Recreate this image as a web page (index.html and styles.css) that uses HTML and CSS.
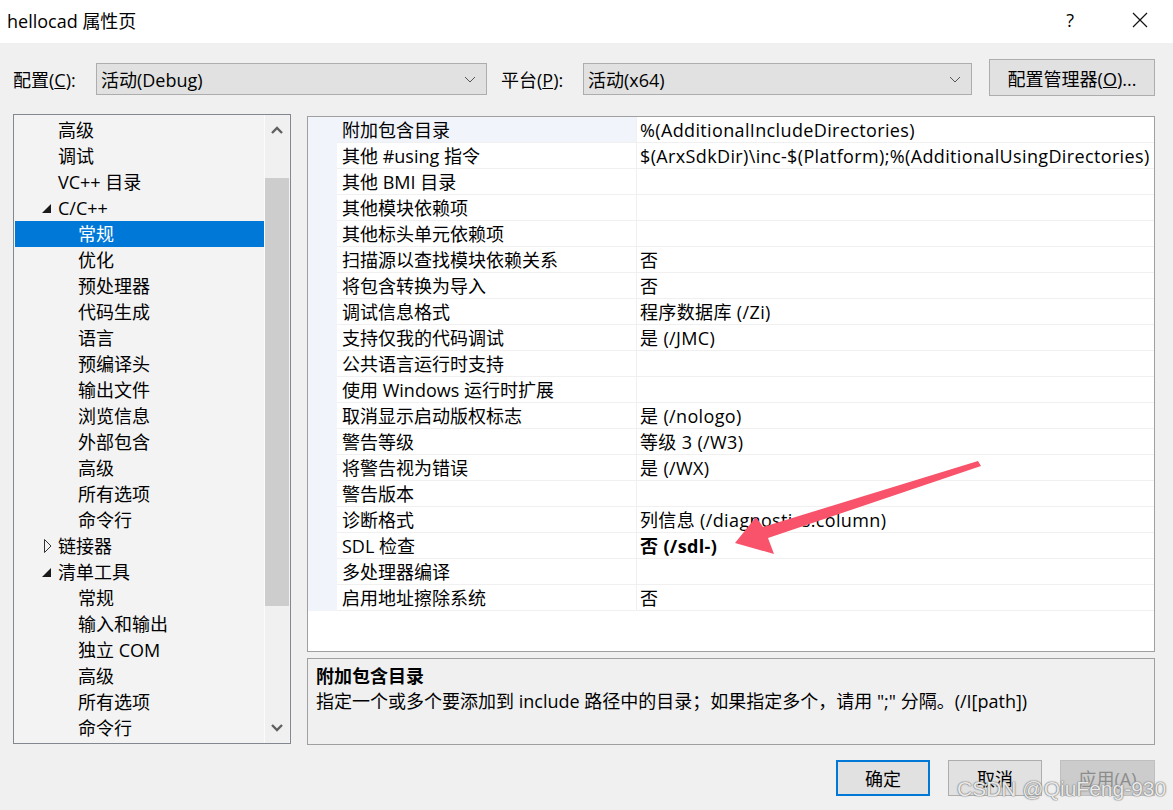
FILE: index.html
```html
<!DOCTYPE html>
<html lang="zh-CN">
<head>
    <meta charset="UTF-8">
    <title>hellocad 属性页</title>
    <link rel="stylesheet" href="styles.css">
</head>
<body>
<div class="window">
    <header class="titlebar">
        <span class="title">hellocad 属性页</span>
        <div class="caption">
            <span class="help">?</span>
            <svg class="close" width="16" height="16" viewBox="0 0 16 16">
                <path d="M1 1 L15 15 M15 1 L1 15" stroke="#111" stroke-width="1.2" fill="none"/>
            </svg>
        </div>
    </header>

    <div class="config-bar">
        <span class="cfg-label">配置(<u>C</u>):</span>
        <div class="combo combo-config">
            <span>活动(Debug)</span>
            <svg class="chev" width="12" height="7" viewBox="0 0 12 7"><path d="M1 1 L6 6 L11 1" stroke="#555" fill="none"/></svg>
        </div>
        <span class="cfg-label platform">平台(<u>P</u>):</span>
        <div class="combo combo-platform">
            <span>活动(x64)</span>
            <svg class="chev" width="12" height="7" viewBox="0 0 12 7"><path d="M1 1 L6 6 L11 1" stroke="#555" fill="none"/></svg>
        </div>
        <button class="btn btn-manager">配置管理器(<u>O</u>)...</button>
    </div>

    <div class="main">
        <div class="tree">
            <ul class="tree-list">
                <li class="node l1">高级</li>
                <li class="node l1">调试</li>
                <li class="node l1">VC++ 目录</li>
                <li class="node l1"><svg class="caret" width="9" height="9" viewBox="0 0 9 9"><polygon points="9,0 9,9 0,9" fill="#1a1a1a"/></svg>C/C++</li>
                <li class="node l2 selected">常规</li>
                <li class="node l2">优化</li>
                <li class="node l2">预处理器</li>
                <li class="node l2">代码生成</li>
                <li class="node l2">语言</li>
                <li class="node l2">预编译头</li>
                <li class="node l2">输出文件</li>
                <li class="node l2">浏览信息</li>
                <li class="node l2">外部包含</li>
                <li class="node l2">高级</li>
                <li class="node l2">所有选项</li>
                <li class="node l2">命令行</li>
                <li class="node l1"><svg class="caret closed" width="8" height="14" viewBox="0 0 8 14"><polygon points="0.5,0.5 7,7 0.5,13.5" fill="none" stroke="#333"/></svg>链接器</li>
                <li class="node l1"><svg class="caret" width="9" height="9" viewBox="0 0 9 9"><polygon points="9,0 9,9 0,9" fill="#1a1a1a"/></svg>清单工具</li>
                <li class="node l2">常规</li>
                <li class="node l2">输入和输出</li>
                <li class="node l2">独立 COM</li>
                <li class="node l2">高级</li>
                <li class="node l2">所有选项</li>
                <li class="node l2">命令行</li>
            </ul>
            <div class="scrollbar">
                <svg class="sb-arrow" width="12" height="8" viewBox="0 0 12 8"><path d="M1 7 L6 2 L11 7" stroke="#606060" stroke-width="2.4" fill="none"/></svg>
                <div class="sb-track"><div class="sb-thumb"></div></div>
                <svg class="sb-arrow" width="12" height="8" viewBox="0 0 12 8"><path d="M1 1 L6 6 L11 1" stroke="#606060" stroke-width="2.4" fill="none"/></svg>
            </div>
        </div>

        <div class="right">
            <div class="grid">
                <table class="props">
                    <tr class="current"><td class="gut"></td><td class="name">附加包含目录</td><td class="val">%(AdditionalIncludeDirectories)</td></tr>
                    <tr><td class="gut"></td><td class="name">其他 #using 指令</td><td class="val">$(ArxSdkDir)\inc-$(Platform);%(AdditionalUsingDirectories)</td></tr>
                    <tr><td class="gut"></td><td class="name">其他 BMI 目录</td><td class="val"></td></tr>
                    <tr><td class="gut"></td><td class="name">其他模块依赖项</td><td class="val"></td></tr>
                    <tr><td class="gut"></td><td class="name">其他标头单元依赖项</td><td class="val"></td></tr>
                    <tr><td class="gut"></td><td class="name">扫描源以查找模块依赖关系</td><td class="val">否</td></tr>
                    <tr><td class="gut"></td><td class="name">将包含转换为导入</td><td class="val">否</td></tr>
                    <tr><td class="gut"></td><td class="name">调试信息格式</td><td class="val">程序数据库 (/Zi)</td></tr>
                    <tr><td class="gut"></td><td class="name">支持仅我的代码调试</td><td class="val">是 (/JMC)</td></tr>
                    <tr><td class="gut"></td><td class="name">公共语言运行时支持</td><td class="val"></td></tr>
                    <tr><td class="gut"></td><td class="name">使用 Windows 运行时扩展</td><td class="val"></td></tr>
                    <tr><td class="gut"></td><td class="name">取消显示启动版权标志</td><td class="val">是 (/nologo)</td></tr>
                    <tr><td class="gut"></td><td class="name">警告等级</td><td class="val">等级 3 (/W3)</td></tr>
                    <tr><td class="gut"></td><td class="name">将警告视为错误</td><td class="val">是 (/WX)</td></tr>
                    <tr><td class="gut"></td><td class="name">警告版本</td><td class="val"></td></tr>
                    <tr><td class="gut"></td><td class="name">诊断格式</td><td class="val">列信息 (/diagnostics:column)</td></tr>
                    <tr><td class="gut"></td><td class="name">SDL 检查</td><td class="val bold">否 (/sdl-)</td></tr>
                    <tr><td class="gut"></td><td class="name">多处理器编译</td><td class="val"></td></tr>
                    <tr><td class="gut"></td><td class="name">启用地址擦除系统</td><td class="val">否</td></tr>
                </table>
            </div>
            <div class="desc">
                <div class="desc-title">附加包含目录</div>
                <div class="desc-text">指定一个或多个要添加到 include 路径中的目录；如果指定多个，请用 ";" 分隔。(/I[path])</div>
            </div>
        </div>
    </div>

    <div class="footer">
        <button class="btn btn-ok">确定</button>
        <button class="btn">取消</button>
        <button class="btn btn-disabled">应用(A)</button>
    </div>

    <svg class="annot-arrow" width="1173" height="810" viewBox="0 0 1173 810">
        <polygon points="735,543 756,517 763,527 978,461 981,466 768,538 774,554" fill="#f8536a"/>
    </svg>
    <div class="watermark">CSDN @QiuFeng-930</div>
</div>
</body>
</html>
```

FILE: styles.css
```css
body {
    margin: 0;
    background-color: #f0f0f0;
    font-family: 'Open Sans', 'Noto Sans CJK SC', sans-serif;
    font-size: 18px;
    color: #000;
}
.window {
    position: relative;
    width: 1173px;
    height: 810px;
    overflow: hidden;
    background-color: #f0f0f0;
}
.titlebar {
    height: 43px;
    background-color: #fff;
    display: flex;
    align-items: center;
    justify-content: space-between;
    padding-left: 7px;
    box-sizing: border-box;
}
.title {
    margin-top: -4px;
}
.caption {
    display: flex;
    align-items: center;
    margin-top: -4px;
}
.help {
    font-size: 18px;
    margin-right: 58px;
}
.close {
    margin-right: 25px;
}
.config-bar {
    height: 71px;
    display: flex;
    align-items: flex-start;
    padding-left: 13px;
    box-sizing: border-box;
}
.cfg-label {
    margin-top: 23px;
    width: 83px;
}
.cfg-label.platform {
    margin-left: 14px;
    width: 82px;
}
.combo {
    margin-top: 20px;
    height: 32px;
    box-sizing: border-box;
    border: 1px solid #adadad;
    background-color: #e1e1e1;
    display: flex;
    align-items: center;
    justify-content: space-between;
    padding: 0 10px 0 4px;
}
.combo-config {
    width: 391px;
}
.combo-platform {
    width: 389px;
}
.btn {
    font-family: inherit;
    font-size: 18px;
    color: #000;
    background-color: #e1e1e1;
    border: 1px solid #adadad;
    height: 36px;
    width: 94px;
    padding: 0;
    box-sizing: border-box;
}
.btn-manager {
    margin-top: 16px;
    margin-left: 17px;
    width: 166px;
    height: 37px;
}
.main {
    display: flex;
    padding-left: 13px;
    gap: 16px;
}
.tree {
    width: 278px;
    height: 630px;
    box-sizing: border-box;
    border: 1px solid #828790;
    background-color: #f3f3f3;
    display: flex;
}
.tree-list {
    list-style: none;
    margin: 0;
    padding: 2px 0 0 1px;
    flex: 1;
}
.node {
    height: 26px;
    line-height: 26px;
    white-space: nowrap;
    position: relative;
}
.node.l1 {
    padding-left: 43px;
}
.node.l2 {
    padding-left: 63px;
}
.node.selected {
    background-color: #0078d7;
    color: #fff;
}
.caret {
    position: absolute;
    left: 27px;
    top: 9px;
}
.caret.closed {
    left: 29px;
    top: 6px;
}
.scrollbar {
    width: 24px;
    margin-right: 1px;
    border-left: 1px solid #fbfbfb;
    background-color: #f0f0f0;
    display: flex;
    flex-direction: column;
    align-items: center;
}
.sb-arrow {
    margin: 11px 0;
}
.sb-track {
    flex: 1;
    width: 100%;
    padding-top: 33px;
    padding-bottom: 107px;
    box-sizing: border-box;
    margin: 0;
}
.sb-thumb {
    background-color: #cdcdcd;
    height: 100%;
}
.right {
    width: 848px;
    margin-top: 2px;
    display: flex;
    flex-direction: column;
    gap: 6px;
}
.grid {
    height: 536px;
    box-sizing: border-box;
    border: 1px solid #a0a0a0;
    background-color: #fff;
}
.props {
    border-collapse: collapse;
    width: 100%;
    table-layout: fixed;
}
.props td {
    height: 23px;
    padding: 2px 0 0 0;
    border-bottom: 1px solid #f0f0f0;
    white-space: nowrap;
    overflow: hidden;
    line-height: 23px;
}
.props td.gut {
    width: 29px;
    background-color: #f1f5fb;
    border-bottom-color: #f1f5fb;
}
.props td.name {
    width: 294px;
    padding-left: 5px;
    border-right: 1px solid #f0f0f0;
}
.props td.val {
    padding-left: 3px;
    letter-spacing: 0.36px;
}
.props tr.current td.name {
    background-color: #f1f5fb;
}
.bold {
    font-weight: bold;
}
.desc {
    height: 87px;
    box-sizing: border-box;
    border: 1px solid #a0a0a0;
    padding: 5px 8px;
    line-height: 25px;
}
.desc-title {
    font-weight: bold;
}
.footer {
    display: flex;
    justify-content: flex-end;
    gap: 18px;
    padding: 15px 18px 0 0;
}
.btn-ok {
    border: 2px solid #0078d7;
}
.btn-disabled {
    background-color: #cccccc;
    border-color: #bfbfbf;
    color: #8c8c8c;
    width: 95px;
}
.annot-arrow {
    position: absolute;
    left: 0;
    top: 0;
    pointer-events: none;
}
.watermark {
    position: absolute;
    left: 957px;
    top: 777px;
    white-space: nowrap;
    font-family: 'Liberation Sans', sans-serif;
    font-size: 21px;
    color: rgba(255, 255, 255, 0.85);
    text-shadow: 0 0 1px #777, 0 0 1px #777, 0 0 2px #999;
}
```
